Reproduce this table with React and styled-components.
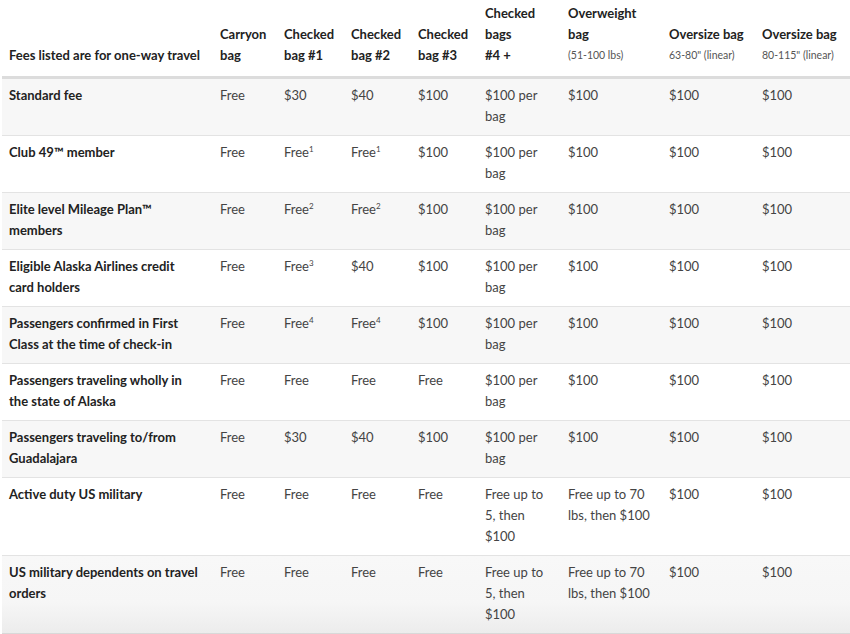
import React from 'react';
import styled, { createGlobalStyle } from 'styled-components';

const GlobalStyle = createGlobalStyle`
  html, body {
    margin: 0;
    padding: 0;
    background: #fff;
  }
  body {
    font-family: Lato, 'Liberation Sans', sans-serif;
    -webkit-font-smoothing: antialiased;
  }
`;

const Wrap = styled.div`
  width: 848px;
  margin-left: 2px;
  overflow: hidden;
  height: 634px;
`;

const Table = styled.table`
  width: 848px;
  table-layout: fixed;
  border-collapse: collapse;
  font-size: 13px;
  line-height: 21px;
`;

const HeadCell = styled.th`
  text-align: left;
  vertical-align: bottom;
  font-weight: 700;
  color: #222;
  padding: 3px 7px 10px;
  border-bottom: 3px solid #dcdcdc;
  small {
    display: block;
    font-size: 10.5px;
    font-weight: 400;
    color: #555;
  }
`;

const Row = styled.tr`
  background: ${(p) => (p.$shade ? '#f7f7f7' : '#fff')};
  border-bottom: 1px solid #e3e3e3;
  &:last-child {
    background: linear-gradient(#f8f8f8 0%, #f6f6f6 60%, #ececec 100%);
    border-bottom-color: #d8d8d8;
  }
`;

const Label = styled.th`
  text-align: left;
  vertical-align: top;
  font-weight: 700;
  color: #222;
  padding: 6px 13px 8px 7px;
`;

const Cell = styled.td`
  vertical-align: top;
  color: #444;
  padding: 6px 7px 8px;
  sup {
    font-size: 8px;
    line-height: 0;
    vertical-align: 5px;
  }
`;

const widths = [211, 64, 67, 67, 67, 83, 101, 93, 95];

const headers = [
  [['Fees listed are for one-way travel']],
  [['Carryon', 'bag']],
  [['Checked', 'bag #1']],
  [['Checked', 'bag #2']],
  [['Checked', 'bag #3']],
  [['Checked', 'bags', '#4 +']],
  [['Overweight', 'bag'], '(51-100 lbs)'],
  [['Oversize bag'], '63-80" (linear)'],
  [['Oversize bag'], '80-115" (linear)'],
];

const F = (n) => (
  <>
    Free<sup>{n}</sup>
  </>
);

const per = '$100 per bag';
const rows = [
  ['Standard fee', 'Free', '$30', '$40', '$100', per, '$100', '$100', '$100'],
  ['Club 49™ member', 'Free', F(1), F(1), '$100', per, '$100', '$100', '$100'],
  ['Elite level Mileage Plan™ members', 'Free', F(2), F(2), '$100', per, '$100', '$100', '$100'],
  ['Eligible Alaska Airlines credit card holders', 'Free', F(3), '$40', '$100', per, '$100', '$100', '$100'],
  ['Passengers confirmed in First Class at the time of check-in', 'Free', F(4), F(4), '$100', per, '$100', '$100', '$100'],
  ['Passengers traveling wholly in the state of Alaska', 'Free', 'Free', 'Free', 'Free', per, '$100', '$100', '$100'],
  ['Passengers traveling to/from Guadalajara', 'Free', '$30', '$40', '$100', per, '$100', '$100', '$100'],
  ['Active duty US military', 'Free', 'Free', 'Free', 'Free', 'Free up to 5, then $100', 'Free up to 70 lbs, then $100', '$100', '$100'],
  ['US military dependents on travel orders', 'Free', 'Free', 'Free', 'Free', 'Free up to 5, then $100', 'Free up to 70 lbs, then $100', '$100', '$100'],
];

export default function App() {
  return (
    <Wrap>
      <GlobalStyle />
      <Table>
        <colgroup>
          {widths.map((w, i) => (
            <col key={i} style={{ width: w }} />
          ))}
        </colgroup>
        <thead>
          <tr>
            {headers.map(([lines, note], i) => (
              <HeadCell key={i}>
                {lines.map((l, j) => (
                  <React.Fragment key={j}>
                    {j > 0 && <br />}
                    {l}
                  </React.Fragment>
                ))}
                {note && <small>{note}</small>}
              </HeadCell>
            ))}
          </tr>
        </thead>
        <tbody>
          {rows.map(([label, ...cells], r) => (
            <Row key={r} $shade={r % 2 === 0}>
              <Label>{label}</Label>
              {cells.map((c, i) => (
                <Cell key={i}>{c}</Cell>
              ))}
            </Row>
          ))}
        </tbody>
      </Table>
    </Wrap>
  );
}
